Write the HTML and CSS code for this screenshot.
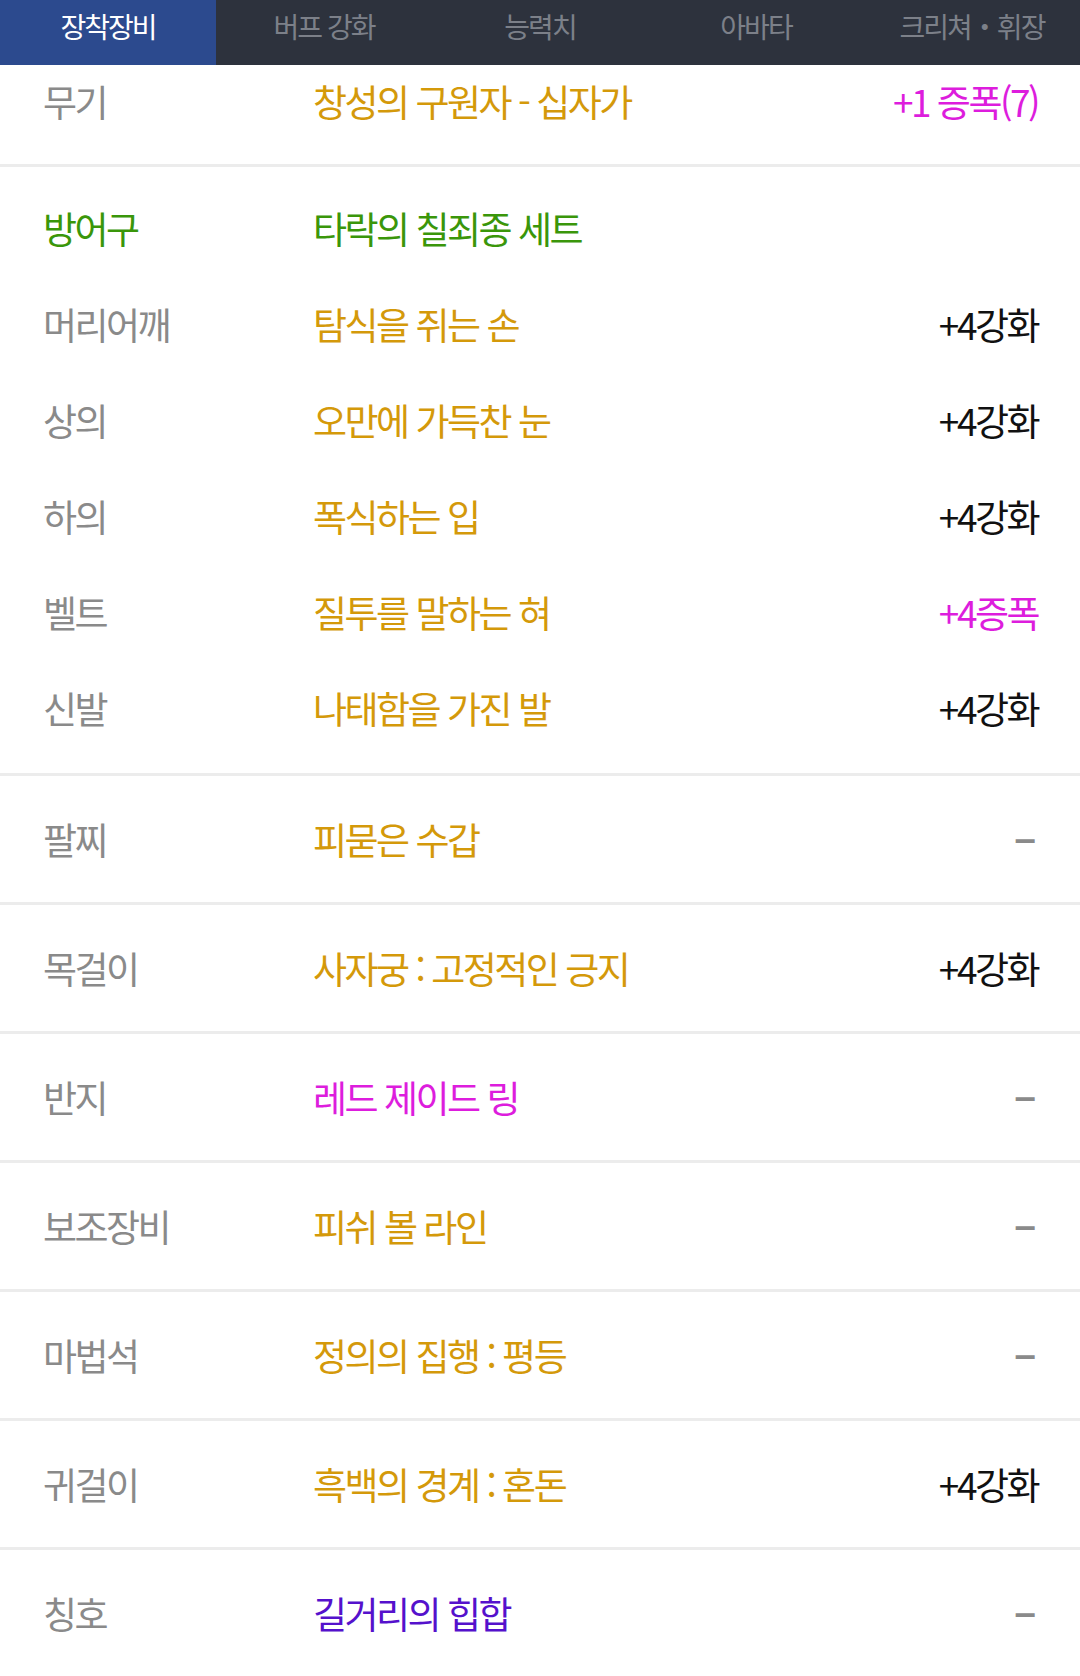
FILE: index.html
```html
<!DOCTYPE html>
<html lang="ko">
<head>
    <meta charset="UTF-8">
    <meta name="viewport" content="width=device-width, initial-scale=1.0">
    <title>장착장비</title>
    <link rel="stylesheet" href="styles.css">
</head>
<body>

    <nav class="tabs">
        <a class="tab active">장착장비</a>
        <a class="tab">버프 강화</a>
        <a class="tab">능력치</a>
        <a class="tab">아바타</a>
        <a class="tab">크리쳐・휘장</a>
    </nav>

    <div class="equip-list">
        <div class="group group-first">
            <div class="row">
                <span class="slot">무기</span>
                <span class="name epic">창성의 구원자 - 십자가</span>
                <span class="value amp">+1 증폭(7)</span>
            </div>
        </div>

        <div class="group group-armor">
            <div class="row">
                <span class="slot set">방어구</span>
                <span class="name set">타락의 칠죄종 세트</span>
                <span class="value"></span>
            </div>
            <div class="row">
                <span class="slot">머리어깨</span>
                <span class="name epic">탐식을 쥐는 손</span>
                <span class="value">+4강화</span>
            </div>
            <div class="row">
                <span class="slot">상의</span>
                <span class="name epic">오만에 가득찬 눈</span>
                <span class="value">+4강화</span>
            </div>
            <div class="row">
                <span class="slot">하의</span>
                <span class="name epic">폭식하는 입</span>
                <span class="value">+4강화</span>
            </div>
            <div class="row">
                <span class="slot">벨트</span>
                <span class="name epic">질투를 말하는 혀</span>
                <span class="value amp">+4증폭</span>
            </div>
            <div class="row">
                <span class="slot">신발</span>
                <span class="name epic">나태함을 가진 발</span>
                <span class="value">+4강화</span>
            </div>
        </div>

        <div class="group">
            <div class="row">
                <span class="slot">팔찌</span>
                <span class="name epic">피묻은 수갑</span>
                <span class="value none">−</span>
            </div>
        </div>

        <div class="group">
            <div class="row">
                <span class="slot">목걸이</span>
                <span class="name epic">사자궁 : 고정적인 긍지</span>
                <span class="value">+4강화</span>
            </div>
        </div>

        <div class="group">
            <div class="row">
                <span class="slot">반지</span>
                <span class="name legend">레드 제이드 링</span>
                <span class="value none">−</span>
            </div>
        </div>

        <div class="group">
            <div class="row">
                <span class="slot">보조장비</span>
                <span class="name epic">피쉬 볼 라인</span>
                <span class="value none">−</span>
            </div>
        </div>

        <div class="group">
            <div class="row">
                <span class="slot">마법석</span>
                <span class="name epic">정의의 집행 : 평등</span>
                <span class="value none">−</span>
            </div>
        </div>

        <div class="group">
            <div class="row">
                <span class="slot">귀걸이</span>
                <span class="name epic">흑백의 경계 : 혼돈</span>
                <span class="value">+4강화</span>
            </div>
        </div>

        <div class="group">
            <div class="row">
                <span class="slot">칭호</span>
                <span class="name unique">길거리의 힙합</span>
                <span class="value none">−</span>
            </div>
        </div>
    </div>

</body>
</html>
```

FILE: styles.css
```css
body {
    margin: 0;
    background: #fff;
    font-family: "Noto Sans CJK KR", "Noto Sans", sans-serif;
    overflow: hidden;
}
.tabs {
    position: relative;
    z-index: 1;
    display: flex;
    height: 65px;
    background-color: #2d323d;
}
.tab {
    flex: 1;
    display: flex;
    align-items: center;
    justify-content: center;
    padding-bottom: 14px;
    font-size: 28px;
    letter-spacing: -2px;
    color: #7c8089;
}
.tab.active {
    background-color: #2c4a8e;
    color: #fff;
}
.equip-list {
    padding: 0 42px 0 43px;
}
.group {
    border-bottom: 3px solid #ececec;
    margin: 0 -42px 0 -43px;
    padding: 0 42px 0 43px;
}
.group-first {
    margin-top: -27px;
}
.group-armor {
    padding-top: 13px;
    padding-bottom: 17px;
}
.row {
    display: flex;
    align-items: center;
    height: 126px;
    font-size: 37px;
    letter-spacing: -2.5px;
}
.group-armor .row {
    height: 96px;
}
.slot {
    width: 270px;
    flex-shrink: 0;
    color: #8a8a8a;
}
.name {
    flex: 1;
    white-space: nowrap;
}
.value {
    color: #111;
    text-align: right;
    white-space: nowrap;
}
.epic {
    color: #d4990a;
}
.set {
    color: #3a960a;
}
.legend,
.amp {
    color: #dd1ddd;
}
.unique {
    color: #5511cc;
}
.value.none {
    color: #8a8a8a;
    font-weight: 700;
    letter-spacing: 0;
    margin-right: 2px;
}
```
